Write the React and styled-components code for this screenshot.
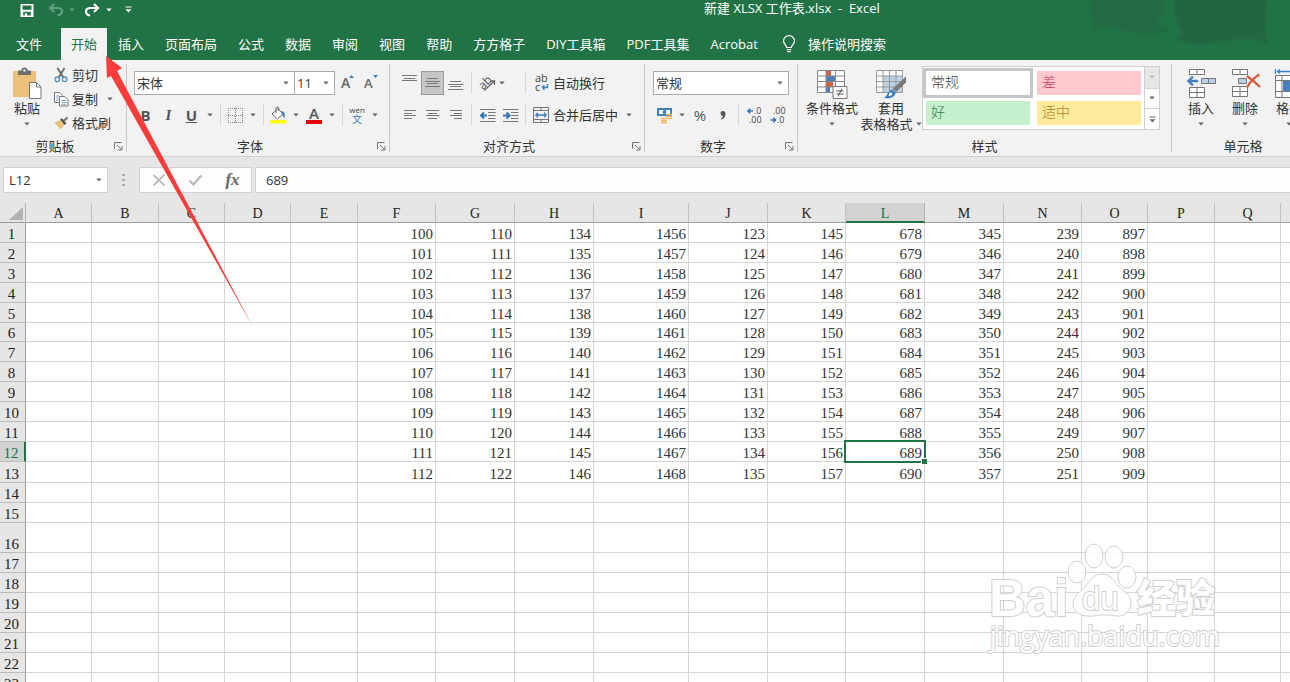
import React, { useState } from 'react'
import styled, { createGlobalStyle } from 'styled-components'

const GlobalStyle = createGlobalStyle`
  * {
    box-sizing: border-box;
  }

  body {
    margin: 0;
    overflow: hidden;
    background: #e6e6e6;
    color: #333;
    font-family: 'Open Sans', 'Noto Sans CJK SC', sans-serif;
    font-size: 13px;
    line-height: 16px;
  }

  button, input, select {
    margin: 0;
    padding: 0;
    border: 0;
    border-radius: 0;
    background: none;
    color: inherit;
    font: inherit;
  }

  svg {
    display: block;
    flex: none;
  }
`

const Window = styled.div`
  position: relative;
  display: flex;
  flex-direction: column;
  height: 100vh;
  overflow: hidden;
`

/* ---------- title bar and tabs ---------- */

const Header = styled.header`
  position: relative;
  overflow: hidden;
  background: #217346;
  color: #fff;
`

const Smudge = styled.svg`
  position: absolute;
  top: 0;
  right: 0;
`

const TitleBar = styled.div`
  display: grid;
  grid-template-columns: 704px 1fr;
  height: 28px;
`

const QuickAccess = styled.div`
  display: flex;
  align-items: flex-start;
  padding: 1px 0 0 19px;
`

const QuickButton = styled.button`
  display: flex;
  align-items: center;
  justify-content: center;
  width: ${p => p.$width}px;
  height: 17px;
  margin-right: ${p => p.$gap || 0}px;
  opacity: ${p => (p.disabled ? 0.3 : 1)};
`

const Title = styled.h1`
  margin: 0;
  font-size: 13px;
  line-height: 17px;
  font-weight: 400;
  white-space: pre;
`

const Tabs = styled.nav`
  display: flex;
  gap: 1px;
  height: 32px;
  padding-left: 6px;
`

const Tab = styled.button`
  padding: 0 10px;
  margin-right: ${p => (p.$file ? 8 : 0)}px;
  background: ${p => (p.$active ? '#f2f2f2' : 'transparent')};
  color: ${p => (p.$active ? '#217346' : '#fff')};
  line-height: 30px;
  white-space: nowrap;
`

const TellMe = styled.button`
  display: flex;
  align-items: center;
  gap: 12px;
  padding: 0 13px;
  font-size: 13px;
  white-space: nowrap;
`

/* ---------- ribbon ---------- */

const Ribbon = styled.div`
  display: flex;
  flex: none;
  padding-top: 3px;
  border-bottom: 1px solid #d0d0d0;
  background: #f2f2f2;
  overflow: hidden;

  svg {
    overflow: visible;
  }
`

const GroupBox = styled.section`
  display: flex;
  flex-direction: column;
  flex: none;
  width: ${p => p.$width}px;
`

const GroupDivider = styled.div`
  flex: none;
  width: 1px;
  margin: 1px 0 4px;
  background: #c8c8c8;
`

const GroupBody = styled.div`
  display: flex;
  height: 72px;
  padding-left: ${p => p.$left || 0}px;
`

const GroupFooter = styled.div`
  display: flex;
  align-items: center;
  height: 21px;
`

const GroupLabel = styled.span`
  flex: 1;
  text-align: center;
`

const Launcher = styled.button`
  width: 16px;
  padding: 2px 0 0 4px;
`

const Stack = styled.div`
  display: flex;
  flex-direction: column;
  gap: ${p => (p.$tight ? 0 : 8)}px;
  padding-top: ${p => (p.$tight ? 0 : 8)}px;
`

const Line = styled.div`
  display: flex;
  align-items: center;
  height: 24px;
`

const Separator = styled.div`
  width: 1px;
  height: 22px;
  margin: 1px ${p => p.$space || 3}px;
  background: #d6d6d6;
`

const BigButton = styled.button`
  display: flex;
  flex-direction: column;
  align-items: center;
  justify-content: flex-end;
  flex: none;
  width: ${p => p.$width}px;
  height: 72px;
  padding-bottom: 3px;
  white-space: nowrap;

  > svg:first-child {
    margin-bottom: 1px;
  }
`

const BigCaret = styled.span`
  display: flex;
  align-items: center;
  gap: 3px;
  height: 16px;
`

const CommandButton = styled.button`
  display: flex;
  align-items: center;
  gap: ${p => p.$gap || 0}px;
  height: 24px;
  white-space: nowrap;
`

const CommandIcon = styled.span`
  display: flex;
  justify-content: center;
  width: ${p => p.$width || 22}px;
`

const ToolButton = styled.button`
  display: flex;
  align-items: center;
  justify-content: center;
  flex: none;
  width: ${p => p.$width || 22}px;
  height: 24px;
  border: ${p => (p.$pressed ? '1px solid #9a9a9a' : '0')};
  background: ${p => (p.$pressed ? '#c6c6c6' : 'transparent')};
`

const CaretButton = styled.button`
  display: flex;
  align-items: center;
  justify-content: center;
  width: ${p => p.$width || 14}px;
  height: 24px;
`

const Letter = styled.span`
  color: #555;
  font-size: 15px;
  line-height: 18px;
  font-weight: ${p => (p.$bold ? 700 : 400)};
  font-style: ${p => (p.$italic ? 'italic' : 'normal')};
  font-family: ${p => (p.$italic ? "'Liberation Serif', serif" : 'inherit')};
  text-decoration: ${p => (p.$underline ? 'underline' : 'none')};
`

const FontColor = styled.span`
  width: 16px;
  border-bottom: 4px solid #e60000;
  color: #555;
  font-size: 15px;
  line-height: 14px;
  font-weight: 600;
  text-align: center;
`

const SelectBox = styled.div`
  display: grid;
  flex: none;
  width: ${p => p.$width}px;
  height: ${p => p.$height || 24}px;
  margin-right: ${p => (p.$joined ? -1 : 0)}px;
  border: 1px solid ${p => p.$line || '#ababab'};
  background: #fff;

  select {
    grid-area: 1 / 1;
    width: 100%;
    padding: 0 16px 0 ${p => p.$inset || 2}px;
    appearance: none;
    outline: 0;
  }

  svg {
    grid-area: 1 / 1;
    align-self: center;
    justify-self: end;
    margin-right: 5px;
    pointer-events: none;
  }
`

const Gallery = styled.div`
  display: flex;
  height: 64px;
  margin-top: 3px;
  border: 1px solid #cfcfcf;
  background: #fff;
`

const GalleryTiles = styled.div`
  display: grid;
  grid-template-columns: 110px 110px;
  grid-auto-rows: 30px;
  gap: 0 1px;
  padding: 1px 0;
`

const StyleTile = styled.button`
  padding-left: 5px;
  border: 3px solid ${p => (p.$selected ? '#c6c6c6' : 'transparent')};
  background: ${p => p.$fill} padding-box;
  color: ${p => p.$ink};
  font-family: 'Liberation Serif', 'Noto Sans CJK SC', serif;
  font-size: 14px;
  font-weight: 300;
  text-align: left;
`

const GalleryScroll = styled.div`
  display: grid;
  grid-template-rows: 1fr 1fr 1fr;
  width: 15px;
  border-left: 1px solid #cfcfcf;
`

const ScrollButton = styled.button`
  display: flex;
  align-items: center;
  justify-content: center;
  background: ${p => (p.disabled ? '#e6e6e6' : '#fff')};

  & + & {
    border-top: 1px solid #cfcfcf;
  }
`

/* ---------- formula bar ---------- */

const FormulaBar = styled.div`
  display: flex;
  flex: none;
  padding: 10px 0 10px 3px;
`

const Grip = styled.div`
  display: flex;
  align-items: center;
  justify-content: center;
  width: 31px;
`

const FormulaButtons = styled.div`
  display: flex;
  align-items: center;
  width: 113px;
  height: 26px;
  margin-right: 3px;
  border: 1px solid #d2d2d2;
  background: #fdfdfd;

  button {
    display: flex;
    justify-content: center;
    flex: 1;
  }
`

const Fx = styled.span`
  color: #666;
  font-family: 'Liberation Serif', serif;
  font-size: 17px;
  font-style: italic;
  font-weight: 700;
`

const FormulaInput = styled.input`
  && {
    flex: 1;
    min-width: 0;
    height: 26px;
    padding: 0 10px;
    border: 1px solid #d2d2d2;
    border-right: 0;
    background: #fdfdfd;
    outline: 0;
  }
`

/* ---------- sheet ---------- */

const SheetArea = styled.main`
  flex: 1;
  min-height: 0;
  overflow: hidden;
`

const Sheet = styled.table`
  width: max-content;
  table-layout: fixed;
  border-collapse: separate;
  border-spacing: 0;
  color: #333;
  font-family: 'Liberation Serif', serif;
  font-size: 15px;
  line-height: 16px;
`

const ColumnHead = styled.th`
  height: 20px;
  padding: 3px 0 0;
  border-right: 1px solid ${p => (p.$active ? '#b0b0b0' : '#c2c2c2')};
  border-bottom: ${p => (p.$active ? '2px solid #217346' : '1px solid #9e9e9e')};
  background: ${p => (p.$active ? '#d2d2d2' : '#e6e6e6')};
  color: ${p => (p.$active ? '#217346' : '#222')};
  font-size: 14px;
  line-height: 14px;
  font-weight: 400;
`

const Corner = styled.td`
  padding: 0 0 2px 9px;
  border-right: 1px solid #b5b5b5;
  border-bottom: 1px solid #9e9e9e;
  background: #e6e6e6;
  vertical-align: bottom;
`

const RowHead = styled.th`
  height: ${p => p.$height}px;
  padding: 0 2px 0 0;
  border-right: ${p => (p.$active ? '2px solid #217346' : '1px solid #9e9e9e')};
  border-bottom: 1px solid #bdbdbd;
  background: ${p => (p.$active ? '#d2d2d2' : '#e6e6e6')};
  color: ${p => (p.$active ? '#217346' : '#222')};
  font-weight: 400;
  vertical-align: bottom;
`

const Cell = styled.td`
  position: relative;
  padding: 0 2px 0 0;
  border-right: 1px solid #d6d6d6;
  border-bottom: 1px solid #d6d6d6;
  background: #fff;
  text-align: right;
  vertical-align: bottom;
`

const Selection = styled.span`
  position: absolute;
  z-index: 1;
  inset: -2px;
  border: 2px solid #217346;

  &::after {
    content: '';
    position: absolute;
    right: -3px;
    bottom: -3px;
    width: 5px;
    height: 5px;
    border: solid #fff;
    border-width: 1px 0 0 1px;
    background: #217346;
  }
`

const Annotation = styled.svg`
  position: absolute;
  left: 104px;
  top: 54px;
  z-index: 2;
  pointer-events: none;
`

const Watermark = styled.svg`
  position: absolute;
  right: 64px;
  bottom: 22px;
  z-index: 2;
  pointer-events: none;

  .shape {
    fill: #fff;
    fill-opacity: 0.85;
    stroke: #cfcfcf;
    stroke-width: 1;
  }

  .outline {
    fill: #fff;
    stroke: #cfcfcf;
    stroke-width: 2;
    paint-order: stroke;
  }
`

/* ---------- icons ---------- */

const Caret = ({ color = '#666' }) => (
  <svg width="6" height="4" viewBox="0 0 6 4"><path d="M0.3 0.5h5.4L3 3.5z" fill={color} /></svg>
)

const MoreCaret = ({ color = '#666' }) => (
  <svg width="7" height="7" viewBox="0 0 7 7"><path d="M0.5 0.5h6v1h-6zM0.5 3.2h6L3.5 6.4z" fill={color} /></svg>
)

const SaveIcon = () => (
  <svg width="16" height="16" viewBox="0 0 16 16">
    <path fillRule="evenodd" d="M1.5 2h13v13h-13zM3.5 3.5v4.2h9V3.5zM4.2 9.8v3.8h1.6v-2.3h2.4v2.3h3.6V9.8z" fill="#fff" />
  </svg>
)

const UndoIcon = () => (
  <svg width="16" height="14" viewBox="0 0 16 14" fill="none" stroke="#fff" strokeWidth="2.2">
    <path d="M6 1L2 5l4 4M2.5 5H10c3 0 4.5 2 4 4-.4 2-2 3-4.5 3.5" />
  </svg>
)

const RedoIcon = () => (
  <svg width="16" height="14" viewBox="0 0 16 14" fill="none" stroke="#fff" strokeWidth="2.2">
    <path d="M10 1l4 4-4 4M13.5 5H6.5c-3 0-4.5 1.5-4.5 3.500C2 10.5 3.5 12 6 12.5" />
  </svg>
)

const BulbIcon = () => (
  <svg width="14" height="18" viewBox="0 0 14 18" fill="none" stroke="#fff" strokeWidth="1.2">
    <path d="M4.6 12.5C4.600 10 1.5 9 1.5 6a5.500 5.3 0 0 1 11 0c0 3-3.1 4-3.1 6.5zM4.8 14.6h4.4M5.2 16.6h3.6" />
  </svg>
)

const PasteIcon = () => (
  <svg width="30" height="32" viewBox="0 0 30 32">
    <rect x="1" y="4" width="23" height="26" rx="1" fill="#ecc079" />
    <path d="M6 3.5h3.5a3 3 0 0 1 6 0H19V8H6z" fill="#6d6d6d" />
    <circle cx="12.5" cy="3.5" r="1.2" fill="#f2f2f2" />
    <path d="M17.5 15.5h7l4.5 4.5v11.5H17.5z" fill="#fff" stroke="#777" />
    <path d="M24.5 15.5V20H29" fill="none" stroke="#777" />
  </svg>
)

const CutIcon = () => (
  <svg width="14" height="16" viewBox="0 0 14 16" fill="none">
    <path d="M3.5 1l5.8 9.5M10.5 1L4.7 10.5" stroke="#666" strokeWidth="1.8" />
    <circle cx="3.3" cy="12.3" r="2.3" stroke="#5a8fc4" strokeWidth="1.3" />
    <circle cx="10.7" cy="12.3" r="2.3" stroke="#5a8fc4" strokeWidth="1.3" />
  </svg>
)

const CopyIcon = () => (
  <svg width="15" height="16" viewBox="0 0 15 16" fill="#fff" stroke="#777">
    <path d="M.5 1.5h5l3 3v7h-8z" />
    <path d="M5.5 5.5h5.5l3 3v6.500H5.5z" />
    <path d="M2 5h3M2 7h2.5M2 9h2.5M7.5 9.5h4.5M7.5 11.5h4.5M7.5 13.3h4.5" stroke="#5a8fc4" strokeWidth=".8" />
  </svg>
)

const BrushIcon = () => (
  <svg width="15" height="14" viewBox="0 0 15 14">
    <path d="M0.5 6.5L6 4l4.5 5L6.5 13.5z" fill="#ecc079" />
    <path d="M6 3.5l2-1.3 4.5 5-2 1.8z" fill="#555" />
    <path d="M9.3 3.7L13 .5l1.3 1.7-3.5 3.2z" fill="#777" />
  </svg>
)

const LauncherIcon = () => (
  <svg width="9" height="9" viewBox="0 0 9 9" fill="none" stroke="#777">
    <path d="M.5 7V.5H7.5M3 3l4.5 4.5M8 4v4H4" />
  </svg>
)

const GrowIcon = ({ down }) => (
  <svg width="16" height="18" viewBox="0 0 16 18">
    <text x="2" y="14" fontSize={down ? 13 : 14} fontWeight="600" fill="#666">A</text>
    <path d={down ? 'M11 1h5l-2.500 3z' : 'M10 4h5l-2.500-3z'} fill="#3f7fbf" />
  </svg>
)

const BorderIcon = () => (
  <svg width="15" height="15" viewBox="0 0 15 15" fill="none" stroke="#888" strokeDasharray="1 1">
    <path d="M0 .5h15M0 7.5h15M0 14.5h15M.5 0v15M7.5 0v15M14.5 0v15" />
  </svg>
)

const FillIcon = () => (
  <svg width="18" height="18" viewBox="0 0 18 18">
    <path d="M3 8l6-5.5 5 5.5-5.5 5z" fill="#fff" stroke="#666" />
    <path d="M7 7V2.5C7 .5 9.8.5 9.8 2.5V5" fill="none" stroke="#666" />
    <path d="M12.5 5c3 .6 4 3.5 3 7-1.5-.6-1.7-3-3-4z" fill="#4a7fb5" />
    <path d="M1 14h16v3.5H1z" fill="#ffff00" />
  </svg>
)

const PhoneticIcon = () => (
  <svg width="20" height="18" viewBox="0 0 20 18">
    <text x="10" y="7" fontSize="8" textAnchor="middle" fill="#444">wén</text>
    <text x="10" y="17" fontSize="10" textAnchor="middle" fill="#3f7fbf">文</text>
  </svg>
)

const LINES = {
  top: ['M0 .5h15', 'M2 3.5h11', 'M0 5.5h15'],
  middle: ['M2 3.5h11', 'M0 6.5h15', 'M2 8.5h11', 'M0 11.5h15'],
  bottom: ['M2 6.5h11', 'M0 9.5h15', 'M2 11.5h11', 'M0 14.5h15'],
  left: ['M2 3.5h12', 'M2 6.5h8', 'M2 8.5h12', 'M2 11.500h8'],
  center: ['M1 3.5h13', 'M3 6.5h9', 'M1 8.5h13', 'M3 11.5h9'],
  right: ['M2 3.5h12', 'M6 6.5h8', 'M2 8.5h12', 'M6 11.5h8'],
}

const LinesIcon = ({ kind }) => (
  <svg width="15" height="16" viewBox="0 0 15 16" stroke="#777">
    <path d={LINES[kind].join('')} />
  </svg>
)

const OrientationIcon = () => (
  <svg width="17" height="17" viewBox="0 0 17 17">
    <text x="0" y="12" fontSize="12" fill="#555" transform="rotate(-45 6 9)">ab</text>
    <path d="M5 15.500L15 6.500M11.500 6h4v4" fill="none" stroke="#666" strokeWidth="1.3" />
  </svg>
)

const IndentIcon = ({ out }) => (
  <svg width="16" height="15" viewBox="0 0 16 15" fill="none">
    <path d="M0 1.5h15.5M8 4.5h7.5M8 7.5h7.5M8 10.5h7.5M0 13.5h15.5" stroke="#777" />
    <path d={out ? 'M7 7.5H1M4 4.5l-3 3 3 3' : 'M0 7.5h6M3.5 4.5l3 3-3 3'} stroke="#3573b1" strokeWidth="2" />
  </svg>
)

const WrapIcon = () => (
  <svg width="15" height="16" viewBox="0 0 15 16">
    <text x="1" y="7" fontSize="11" fill="#444">ab</text>
    <text x="1" y="16" fontSize="11" fill="#444">c</text>
    <path d="M13.5 9v3.5H8.5M10.500 10.300L8.5 12.500l2 2.200" fill="none" stroke="#3f7fbf" strokeWidth="1.4" />
  </svg>
)

const MergeIcon = () => (
  <svg width="16" height="16" viewBox="0 0 16 16" fill="none">
    <path d="M.5 .5h15v15H.5zM.5 3.5h15M.5 12.5h15M8 .5v3M8 12.500v3" stroke="#777" />
    <path d="M2.5 8h11M5 5.8L2.8 8 5 10.2M11 5.8L13.2 8 11 10.2" stroke="#3f7fbf" strokeWidth="1.3" />
  </svg>
)

const CurrencyIcon = () => (
  <svg width="17" height="17" viewBox="0 0 17 17">
    <path d="M1 1h15v8H1z" fill="#3f7fbf" />
    <path d="M3 3h11v4H3z" fill="#fff" />
    <circle cx="8.5" cy="5" r="2" fill="#3f7fbf" />
    <path d="M10 7.5h6M10 9.5h6M5 11.5h6M5 13.5h6M5 15.5h6M12 11.5h4" stroke="#ecb765" strokeWidth="1.5" />
  </svg>
)

const CommaIcon = () => (
  <svg width="6" height="9" viewBox="0 0 6 9">
    <path d="M3 0a2.500 2.500 0 0 1 2.500 3C5.500 5.500 4 7.800 1.500 8.800L1 7.800C2.300 7 3 6 3.100 5A2.500 2.500 0 0 1 3 0z" fill="#555" />
  </svg>
)

const DecimalIcon = ({ more }) => (
  <svg width="18" height="18" viewBox="0 0 18 18">
    <text x={more ? 8 : 4} y="8" fontSize="9" fill="#444">{more ? '.0' : '.00'}</text>
    <text x={more ? 3 : 8} y="17" fontSize="9" fill="#444">{more ? '.00' : '.0'}</text>
    <path
      d={more ? 'M7 5H2M4.2 2.8L2 5l2.2 2.2' : 'M1.5 14h5M4.3 11.8L6.5 14l-2.2 2.2'}
      fill="none"
      stroke="#3573b1"
      strokeWidth="1.6"
    />
  </svg>
)

const ConditionalIcon = () => (
  <svg width="32" height="30" viewBox="0 0 32 30">
    <path d="M1.5 1.5h27v22h-27z" fill="#fff" />
    <path d="M10 1.5h5v5.5h-5zM10 13h7v5h-7z" fill="#d2603f" />
    <path d="M10 7h9v6h-9zM10 18h4v5.5h-4z" fill="#4a7fb9" />
    <path d="M1.5 1.5h27v22h-27zM1.5 7h27M1.5 12.5h27M1.5 18h27M10 1.5v22M19.5 1.5v22" fill="none" stroke="#888" />
    <path d="M17 17.5h14v12H17z" fill="#fff" stroke="#777" />
    <path d="M20.5 22h7M20.5 25h7M26 19.5l-4 8" stroke="#555" fill="none" />
  </svg>
)

const TableFormatIcon = () => (
  <svg width="32" height="30" viewBox="0 0 32 30">
    <path d="M1.5 1.5h26v22h-26z" fill="#fff" />
    <path d="M8 7h19.5v16.5H8z" fill="#bcd0e6" />
    <path d="M1.5 1.5h26v22h-26zM1.5 7h26M1.5 12.5h26M1.5 18h26M8 1.5v22M14.5 1.5v22M21 1.5v22" fill="none" stroke="#999" />
    <path d="M31 7.5v6L21 23l-3.5-3z" fill="#7a7a7a" />
    <path d="M17 20.5l3.8 3.200C20 28 15 30 9 29c3-1.5 4-7.5 8-8.5z" fill="#3f7fbf" />
    <path d="M15 23l2.5 2c-.6 1.5-2.500 2-4 2z" fill="#fff" />
  </svg>
)

const InsertIcon = () => (
  <svg width="31" height="30" viewBox="0 0 31 30" fill="#fff" stroke="#777">
    <path d="M3.5 .5h15v5h-15zM11 .5v5M3.5 18.5h15v10h-15zM11 18.5v10M3.5 23.5h15" />
    <path d="M15.5 9.5h14v5h-14zM22.5 9.5v5" fill="#bcd0e6" />
    <path d="M12 12H2.5M7 7.5L2.5 12 7 16.5" fill="none" stroke="#3f7fbf" strokeWidth="2.4" />
  </svg>
)

const DeleteIcon = () => (
  <svg width="31" height="30" viewBox="0 0 31 30" fill="#fff" stroke="#777">
    <path d="M2.5 .5h15v5h-15zM10 .5v5M2.5 17.5h15v10h-15zM10 17.5v10M2.5 22.5h15" />
    <path d="M8.5 9.5h8v5h-8z" fill="#bcd0e6" />
    <path d="M17 7c4 3 8 6 13 11M29.5 5.500C25 8 20 13 17 18.5" fill="none" stroke="#d95b39" strokeWidth="2.2" />
  </svg>
)

const FormatIcon = () => (
  <svg width="31" height="30" viewBox="0 0 31 30" fill="#fff" stroke="#777">
    <path d="M1.5 6.5h28v22h-28zM1.5 11.5h28M1.5 22.5h28M8 6.5v22M23 6.5v22" />
    <path d="M9 12h13.5v10H9z" fill="#4a7fb9" stroke="none" />
    <path d="M1.5 0v5M29.5 0v5M3 2.5h25M6 .5l-2.5 2L6 4.5M25 .5l2.5 2-2.5 2" fill="none" stroke="#3f7fbf" strokeWidth="1.3" />
  </svg>
)

/* ---------- data ---------- */

const TABS = ['文件', '开始', '插入', '页面布局', '公式', '数据', '审阅', '视图', '帮助', '方方格子', 'DIY工具箱', 'PDF工具集', 'Acrobat']

const STYLES = [
  { name: '常规', fill: '#fff', ink: '#444' },
  { name: '差', fill: '#ffc7ce', ink: '#c2405a' },
  { name: '好', fill: '#c6efce', ink: '#2f8442' },
  { name: '适中', fill: '#ffeb9c', ink: '#b07d1e' },
]

const COLUMNS = [
  { name: 'A', width: 66 },
  { name: 'B', width: 67 },
  { name: 'C', width: 66 },
  { name: 'D', width: 66 },
  { name: 'E', width: 67 },
  { name: 'F', width: 78, start: 100 },
  { name: 'G', width: 79, start: 110 },
  { name: 'H', width: 79, start: 134 },
  { name: 'I', width: 95, start: 1456 },
  { name: 'J', width: 79, start: 123 },
  { name: 'K', width: 78, start: 145 },
  { name: 'L', width: 79, start: 678 },
  { name: 'M', width: 79, start: 345 },
  { name: 'N', width: 78, start: 239 },
  { name: 'O', width: 66, start: 897 },
  { name: 'P', width: 67 },
  { name: 'Q', width: 66 },
  { name: 'R', width: 66 },
]

const ROW_HEIGHTS = { 6: 19, 13: 21, 16: 30 }
const ROWS = Array.from({ length: 26 }, (_, i) => i + 1)
const FILLED_ROWS = 13

const valueAt = (column, row) => (column.start && row <= FILLED_ROWS ? column.start + row - 1 : null)

/* ---------- parts ---------- */

const Group = ({ label, width, left, launcher, children }) => (
  <>
    <GroupBox $width={width} aria-label={label}>
      <GroupBody $left={left}>{children}</GroupBody>
      <GroupFooter>
        <GroupLabel>{label}</GroupLabel>
        {launcher && <Launcher aria-label={`${label}设置`}><LauncherIcon /></Launcher>}
      </GroupFooter>
    </GroupBox>
    <GroupDivider />
  </>
)

const Dropdown = ({ label, value, ...box }) => (
  <SelectBox {...box}>
    <select aria-label={label} defaultValue={value}>
      <option>{value}</option>
    </select>
    <Caret />
  </SelectBox>
)

const More = ({ label, width }) => (
  <CaretButton aria-label={label} $width={width}><Caret /></CaretButton>
)

const App = () => {
  const [activeTab, setActiveTab] = useState('开始')
  const [cellStyle, setCellStyle] = useState('常规')
  const [selected, setSelected] = useState({ column: 'L', row: 12 })
  const [align, setAlign] = useState('middle')

  const selectedColumn = COLUMNS.find(c => c.name === selected.column)
  const formula = valueAt(selectedColumn, selected.row) ?? ''
  const address = `${selected.column}${selected.row}`

  return (
    <Window>
      <GlobalStyle />
      <Header>
        <Smudge width="210" height="60" viewBox="0 0 210 60">
          <filter id="soft"><feGaussianBlur stdDeviation="1.5" /></filter>
          <g fill="#23663f" filter="url(#soft)">
            <path d="M12-4h66c12 10 6 22-4 26 6 4 14 4 18 8-16 6-40 4-60-2-8-1-14 0-20 4 4-8-6-20 0-36z" opacity=".7" />
            <path d="M94-4h92c4 16-6 28 2 48-14-8-30-4-46-2-18 3-40 4-48-6 4 0 8 0 8-4-8-8-8-26-8-36z" />
          </g>
        </Smudge>
        <TitleBar>
          <QuickAccess>
            <QuickButton aria-label="保存" $width={16} $gap={13}><SaveIcon /></QuickButton>
            <QuickButton aria-label="撤消" $width={16} $gap={4} disabled><UndoIcon /></QuickButton>
            <QuickButton aria-label="撤消列表" $width={8} $gap={8} disabled><Caret color="#fff" /></QuickButton>
            <QuickButton aria-label="恢复" $width={16} $gap={5}><RedoIcon /></QuickButton>
            <QuickButton aria-label="恢复列表" $width={8} $gap={11}><Caret color="#fff" /></QuickButton>
            <QuickButton aria-label="自定义快速访问工具栏" $width={8}><MoreCaret color="#fff" /></QuickButton>
          </QuickAccess>
          <Title>新建 XLSX 工作表.xlsx  -  Excel</Title>
        </TitleBar>
        <Tabs>
          {TABS.map((tab, i) => (
            <Tab key={tab} $file={i === 0} $active={tab === activeTab} onClick={() => setActiveTab(tab)}>
              {tab}
            </Tab>
          ))}
          <TellMe><BulbIcon />操作说明搜索</TellMe>
        </Tabs>
      </Header>

      <Ribbon>
        <Group label="剪贴板" width={126} launcher>
          <BigButton $width={54}>
            <PasteIcon />
            粘贴
            <BigCaret><Caret /></BigCaret>
          </BigButton>
          <Stack $tight>
            <CommandButton $gap={4}><CommandIcon $width={14}><CutIcon /></CommandIcon>剪切</CommandButton>
            <Line>
              <CommandButton $gap={4}><CommandIcon $width={14}><CopyIcon /></CommandIcon>复制</CommandButton>
              <More label="复制选项" width={24} />
            </Line>
            <CommandButton $gap={4}><CommandIcon $width={14}><BrushIcon /></CommandIcon>格式刷</CommandButton>
          </Stack>
        </Group>

        <Group label="字体" width={262} left={7} launcher>
          <Stack>
            <Line>
              <Dropdown label="字体" value="宋体" $width={161} $joined />
              <Dropdown label="字号" value="11" $width={41} />
              <ToolButton aria-label="增大字号" $width={24}><GrowIcon /></ToolButton>
              <ToolButton aria-label="减小字号"><GrowIcon down /></ToolButton>
            </Line>
            <Line>
              <ToolButton $width={23}><Letter $bold>B</Letter></ToolButton>
              <ToolButton $width={23}><Letter $bold $italic>I</Letter></ToolButton>
              <ToolButton $width={23}><Letter $bold $underline>U</Letter></ToolButton>
              <More label="下划线" />
              <Separator />
              <ToolButton aria-label="边框"><BorderIcon /></ToolButton>
              <More label="边框选项" />
              <Separator />
              <ToolButton aria-label="填充颜色"><FillIcon /></ToolButton>
              <More label="填充颜色选项" />
              <ToolButton><FontColor>A</FontColor></ToolButton>
              <More label="字体颜色选项" />
              <Separator />
              <ToolButton><PhoneticIcon /></ToolButton>
              <More label="拼音选项" />
            </Line>
          </Stack>
        </Group>

        <Group label="对齐方式" width={254} left={8} launcher>
          <Stack>
            <Line>
              {['top', 'middle', 'bottom'].map(kind => (
                <ToolButton key={kind} aria-label={kind} $width={23} $pressed={align === kind} onClick={() => setAlign(kind)}>
                  <LinesIcon kind={kind} />
                </ToolButton>
              ))}
            </Line>
            <Line>
              {['left', 'center', 'right'].map(kind => (
                <ToolButton key={kind} aria-label={kind} $width={23}><LinesIcon kind={kind} /></ToolButton>
              ))}
            </Line>
          </Stack>
          <Stack>
            <Line><Separator $space={4} /></Line>
            <Line><Separator $space={4} /></Line>
          </Stack>
          <Stack>
            <Line>
              <ToolButton aria-label="方向" $width={23}><OrientationIcon /></ToolButton>
              <More label="方向选项" width={6} />
            </Line>
            <Line>
              <ToolButton aria-label="减少缩进量" $width={23}><IndentIcon out /></ToolButton>
              <ToolButton aria-label="增加缩进量" $width={23}><IndentIcon /></ToolButton>
            </Line>
          </Stack>
          <Stack>
            <Line><Separator /></Line>
            <Line><Separator /></Line>
          </Stack>
          <Stack>
            <CommandButton><CommandIcon $width={24}><WrapIcon /></CommandIcon>自动换行</CommandButton>
            <Line>
              <CommandButton><CommandIcon $width={24}><MergeIcon /></CommandIcon>合并后居中</CommandButton>
              <More label="合并选项" width={22} />
            </Line>
          </Stack>
        </Group>

        <Group label="数字" width={152} left={8} launcher>
          <Stack>
            <Dropdown label="数字格式" value="常规" $width={136} />
            <Line>
              <ToolButton aria-label="会计数字格式"><CurrencyIcon /></ToolButton>
              <More label="会计数字格式选项" />
              <ToolButton><Letter>%</Letter></ToolButton>
              <ToolButton aria-label="千位分隔样式" $width={23}><CommaIcon /></ToolButton>
              <Separator $space={4} />
              <ToolButton $width={23}><DecimalIcon more /></ToolButton>
              <ToolButton $width={23}><DecimalIcon /></ToolButton>
            </Line>
          </Stack>
        </Group>

        <Group label="样式" width={373} left={6}>
          <BigButton $width={56}>
            <ConditionalIcon />
            条件格式
            <BigCaret><Caret /></BigCaret>
          </BigButton>
          <BigButton $width={62}>
            <TableFormatIcon />
            套用
            <BigCaret>表格格式<Caret /></BigCaret>
          </BigButton>
          <Gallery>
            <GalleryTiles>
              {STYLES.map(({ name, fill, ink }) => (
                <StyleTile key={name} $fill={fill} $ink={ink} $selected={name === cellStyle} onClick={() => setCellStyle(name)}>
                  {name}
                </StyleTile>
              ))}
            </GalleryTiles>
            <GalleryScroll>
              <ScrollButton aria-label="上一行" disabled><Caret color="#bbb" /></ScrollButton>
              <ScrollButton aria-label="下一行"><Caret /></ScrollButton>
              <ScrollButton aria-label="其他"><MoreCaret /></ScrollButton>
            </GalleryScroll>
          </Gallery>
        </Group>

        <Group label="单元格" width={142} left={7}>
          <BigButton $width={44}><InsertIcon />插入<BigCaret><Caret /></BigCaret></BigButton>
          <BigButton $width={44}><DeleteIcon />删除<BigCaret><Caret /></BigCaret></BigButton>
          <BigButton $width={44}><FormatIcon />格式<BigCaret><Caret /></BigCaret></BigButton>
        </Group>
      </Ribbon>

      <FormulaBar>
        <Dropdown key={address} label="名称框" value={address} $width={105} $height={26} $inset={5} $line="#d2d2d2" />
        <Grip>
          <svg width="3" height="12" viewBox="0 0 3 12"><path d="M0 0h3v2H0zM0 5h3v2H0zM0 10h3v2H0z" fill="#aaa" /></svg>
        </Grip>
        <FormulaButtons>
          <button aria-label="取消">
            <svg width="14" height="14" viewBox="0 0 14 14"><path d="M1.5 2l11 10.5M12.5 1.5L1.5 12.5" stroke="#bbb" strokeWidth="1.8" /></svg>
          </button>
          <button aria-label="输入">
            <svg width="15" height="14" viewBox="0 0 15 14"><path d="M1.5 7.5l4 4 8-9" fill="none" stroke="#bbb" strokeWidth="2.4" /></svg>
          </button>
          <button aria-label="插入函数"><Fx>fx</Fx></button>
        </FormulaButtons>
        <FormulaInput aria-label="编辑栏" value={formula} readOnly />
      </FormulaBar>

      <SheetArea>
        <Sheet>
          <colgroup>
            <col width="26" />
            {COLUMNS.map(c => <col key={c.name} width={c.width} />)}
          </colgroup>
          <thead>
            <tr>
              <Corner>
                <svg width="14" height="13" viewBox="0 0 14 13"><path d="M14 0v13H0z" fill="#b2b2b2" /></svg>
              </Corner>
              {COLUMNS.map(c => (
                <ColumnHead key={c.name} scope="col" $active={c.name === selected.column}>{c.name}</ColumnHead>
              ))}
            </tr>
          </thead>
          <tbody>
            {ROWS.map(row => (
              <tr key={row}>
                <RowHead scope="row" $height={ROW_HEIGHTS[row] || 20} $active={row === selected.row}>{row}</RowHead>
                {COLUMNS.map(c => (
                  <Cell key={c.name} onClick={() => setSelected({ column: c.name, row })}>
                    {valueAt(c, row)}
                    {c.name === selected.column && row === selected.row && <Selection />}
                  </Cell>
                ))}
              </tr>
            ))}
          </tbody>
        </Sheet>
      </SheetArea>

      <Annotation width="152" height="276" viewBox="104 54 152 276">
        <path d="M106 56L122 68L117 71L253 327L111 76L107 78z" fill="#fa3c3a" />
      </Annotation>

      <Watermark width="240" height="120" viewBox="986 540 240 120">
        <text className="outline" x="989" y="616" fontFamily="Liberation Sans, sans-serif" fontSize="51" fontWeight="700">Bai</text>
        <g className="shape">
          <ellipse cx="1077" cy="572" rx="9" ry="11" />
          <ellipse cx="1094" cy="556" rx="9" ry="12" />
          <ellipse cx="1114" cy="557" rx="9" ry="11" />
          <ellipse cx="1127" cy="577" rx="9" ry="11" />
          <path d="M1102 574c9 0 12 8 17 13 6 5 13 9 12 17-1 9-8 13-15 12-5-1-9-1-14-1s-9 2-15 1c-8 0-14-5-14-12 0-8 7-12 12-17 5-6 8-13 17-13z" />
        </g>
        <text className="outline" x="1082" y="610" fontFamily="Liberation Sans, sans-serif" fontSize="33">du</text>
        <text className="outline" x="1137" y="612" fontFamily="Noto Sans CJK SC, sans-serif" fontSize="39" fontWeight="900">经验</text>
        <text className="outline" x="990" y="646" fontFamily="Open Sans, sans-serif" fontSize="27">jingyan.baidu.com</text>
      </Watermark>
    </Window>
  )
}

export default App
